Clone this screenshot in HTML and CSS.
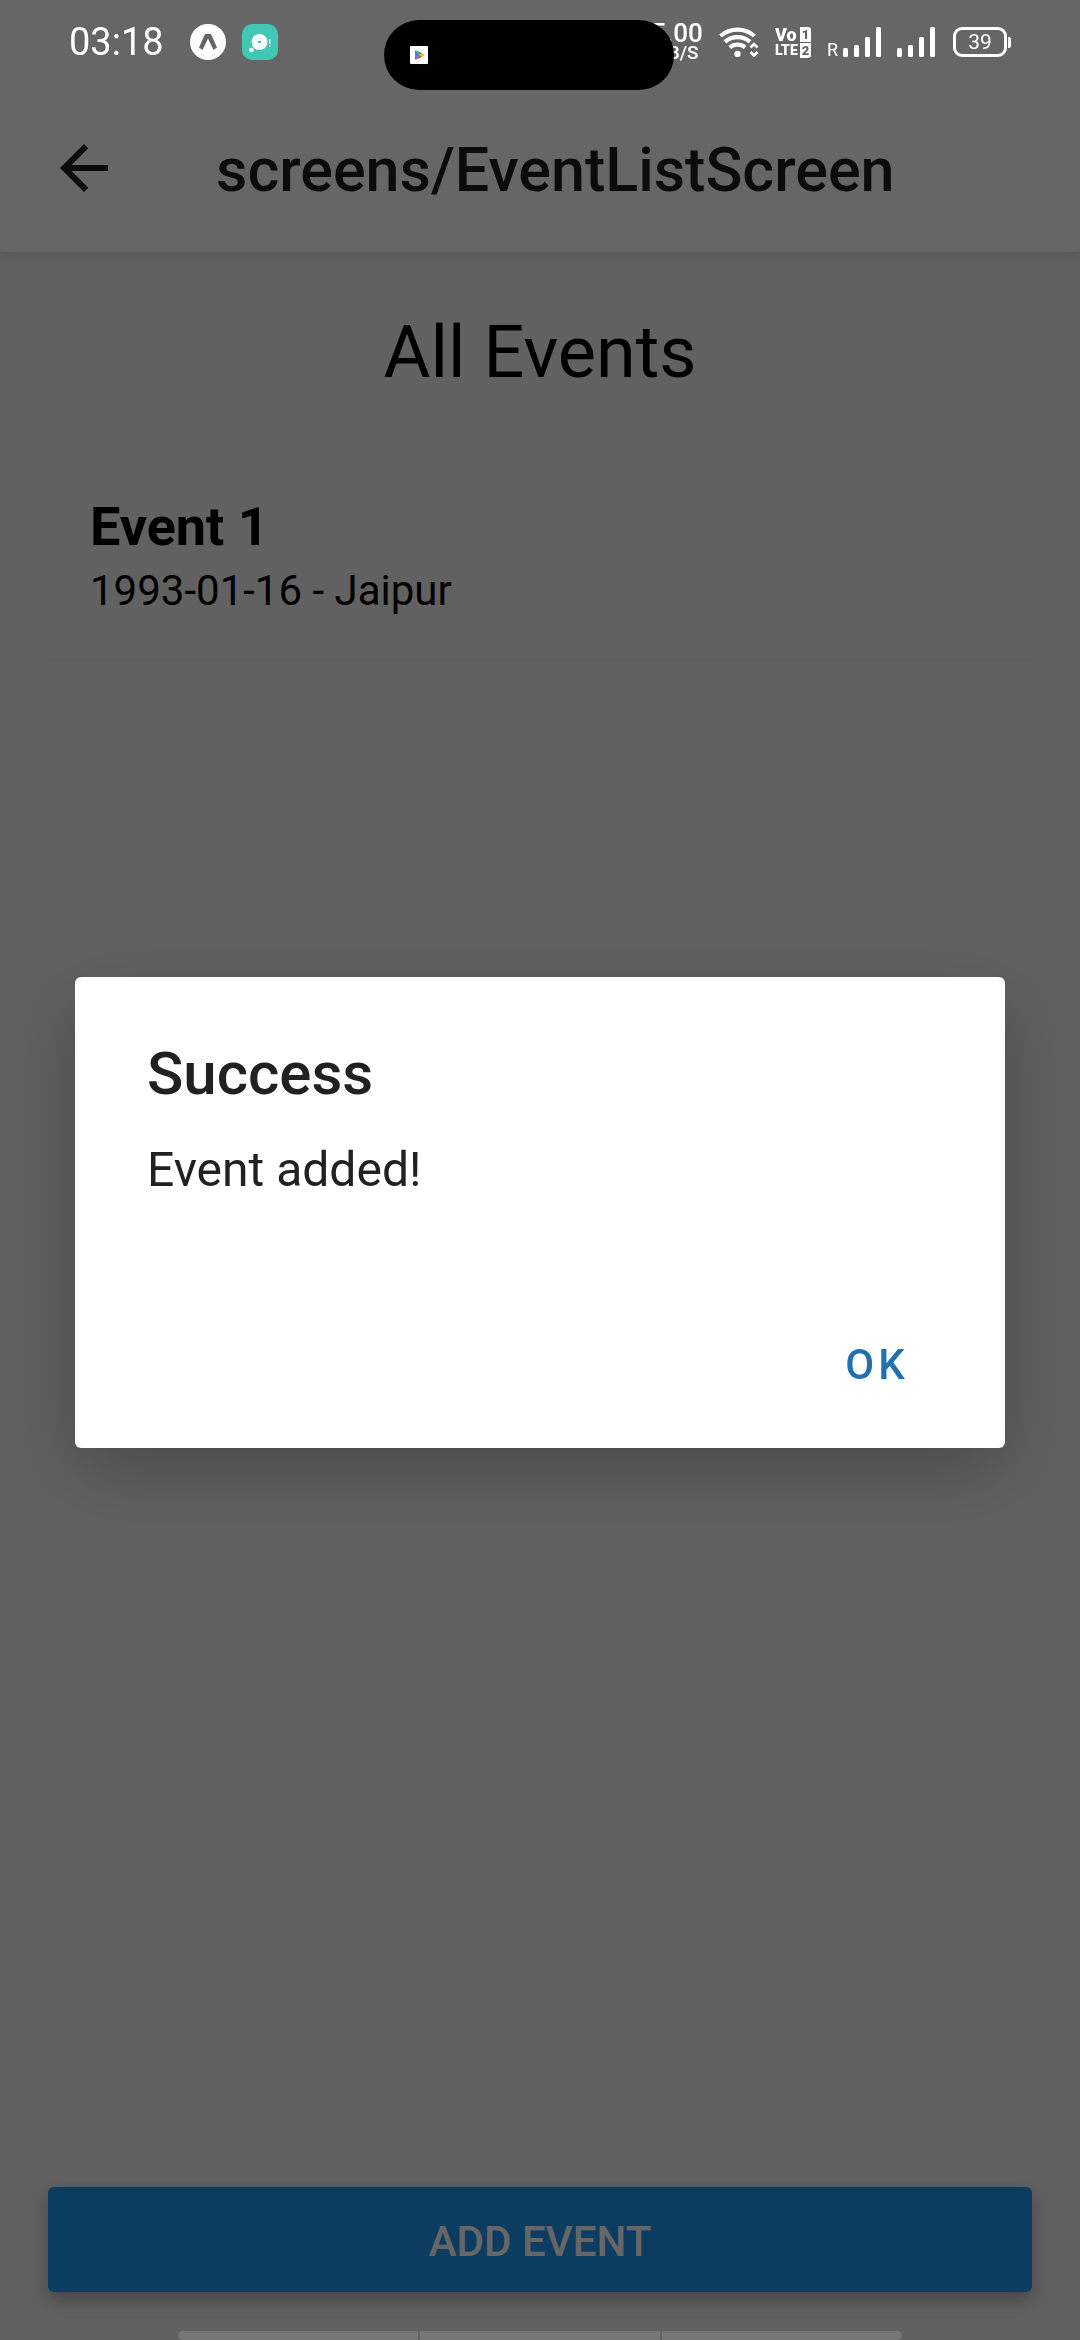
FILE: index.html
```html
<!DOCTYPE html>
<html lang="en">
<head>
<meta charset="utf-8">
<meta name="viewport" content="width=device-width, initial-scale=1">
<title>screens/EventListScreen</title>
<link rel="stylesheet" href="styles.css">
</head>
<body>
<div class="screen">
  <header class="app-bar">
    <button class="back" type="button" aria-label="Back">
      <svg viewBox="0 0 24 24" class="back-icon"><path d="M20 11H7.83l5.59-5.59L12 4l-8 8 8 8 1.41-1.41L7.83 13H20z"/></svg>
    </button>
    <h1 class="app-title">screens/EventListScreen</h1>
  </header>
  <main class="content">
    <h2 class="heading">All Events</h2>
    <ul class="events">
      <li class="event">
        <h3 class="event-name">Event 1</h3>
        <p class="event-info">1993-01-16 - Jaipur</p>
      </li>
    </ul>
    <button class="add" type="button">ADD EVENT</button>
  </main>
</div>

<div class="overlay">
  <section class="dialog" role="alertdialog" aria-labelledby="dialog-title" aria-describedby="dialog-text">
    <h2 class="dialog-title" id="dialog-title">Success</h2>
    <p class="dialog-text" id="dialog-text">Event added!</p>
    <div class="dialog-actions"><button class="ok" type="button">OK</button></div>
  </section>
</div>

<div class="status">
  <div class="status-group">
    <span class="clock">03:18</span>
    <svg class="app-icon" viewBox="0 0 36 36"><circle cx="18" cy="18" r="18" fill="#fff"/><path d="M15 10h6l6 13.500-3.500 2.500L18 14.500 12.500 26 9 23.500z" fill="#666"/></svg>
    <svg class="app-icon" viewBox="0 0 36 36"><rect width="36" height="36" rx="10" fill="#40c8b5"/><circle cx="17.500" cy="18" r="8" fill="#fff"/><rect x="16" y="17" width="3" height="2" fill="#40c8b5"/><circle cx="9.500" cy="26" r="2.300" fill="#fff"/><path d="M27 15h1.500v5H27zM27 21.500h1.500V23H27z" fill="#d5f5ef"/></svg>
  </div>
  <div class="status-group">
    <div class="speed"><span class="speed-value">5.00</span><span class="speed-unit">KB/S</span></div>
    <svg class="wifi" viewBox="0 0 40 30"><g fill="none" stroke="#fff" stroke-width="4.200"><path d="M1.500 9a26 26 0 0 1 34 0"/><path d="M6 14.800a19 19 0 0 1 25 0"/><path d="M10.800 20.500a12 12 0 0 1 15.400 0"/></g><circle cx="18.500" cy="27" r="3.200" fill="#fff"/><path d="M31.500 20.500l3.500-3.500 3.500 3.500M31.500 25l3.500 3.500 3.500-3.500" fill="none" stroke="#fff" stroke-width="2.600"/></svg>
    <div class="volte"><span class="volte-voice">Vo</span><b class="sim">1</b><span>LTE</span><b class="sim">2</b></div>
    <div class="cell"><span class="roaming">R</span>
      <svg class="bars" viewBox="0 0 38 30"><g><rect y="21" width="5" height="9" rx="1.500"/><rect x="11" y="18" width="5" height="12" rx="1.500"/><rect x="22" y="10" width="5" height="20" rx="1.500"/><rect x="33" width="5" height="30" rx="1.500"/></g></svg>
    </div>
    <svg class="bars second" viewBox="0 0 38 30"><g><rect y="21" width="5" height="9" rx="1.500"/><rect x="11" y="18" width="5" height="12" rx="1.500"/><rect x="22" y="10" width="5" height="20" rx="1.500"/><rect x="33" width="5" height="30" rx="1.500"/></g></svg>
    <div class="battery"><span class="battery-level">39</span><i class="battery-tip"></i></div>
  </div>
  <div class="island"><svg class="play" viewBox="0 0 18 18"><rect width="18" height="18" rx="1" fill="#fff"/><path d="M5 4v10l5-5z" fill="#4a80e0"/><path d="M5 4l5 5 2-2z" fill="#3c9f55"/><path d="M5 14l5-5 2 2z" fill="#d8474a"/><path d="M10 9l2-2 3 2-3 2z" fill="#f5b921"/></svg></div>
</div>

<div class="nav-hint"><span></span><span></span><span></span></div>
</body>
</html>
```

FILE: styles.css
```css
* { box-sizing: border-box; }
body { margin: 0; font-family: Roboto, sans-serif; color: #000; }
h1, h2, h3, p, ul { margin: 0; padding: 0; }
button { border: 0; padding: 0; font: inherit; cursor: pointer; }

.screen { min-height: 100vh; display: flex; flex-direction: column; background: #f2f2f2; }

.app-bar {
  display: flex; align-items: center; gap: 96px;
  padding: 84px 48px 0; height: 252px;
  background: #fff; box-shadow: 0 3px 12px rgba(0, 0, 0, .12);
}
.back { width: 72px; height: 72px; background: none; }
.back-icon { display: block; width: 72px; height: 72px; fill: #1c1c1e; }
.app-title { padding-top: 4px; font-size: 61px; line-height: 72px; font-weight: 500; color: #1c1c1e; }

.content { flex: 1; display: flex; flex-direction: column; padding: 53px 48px 48px; }
.heading { font-size: 72px; line-height: 96px; font-weight: 400; text-align: center; }
.events { flex: 1; list-style: none; margin-top: 48px; }
.event { padding: 42px 42px 40px; border-bottom: 3px solid #eee; }
.event-name { font-size: 54px; line-height: 72px; font-weight: 700; }
.event-info { font-size: 42px; line-height: 56px; }
.add {
  height: 105px; padding-top: 3px; border-radius: 6px; background: #2196f3; color: #fff;
  font-size: 42px; font-weight: 500; box-shadow: 0 8px 18px rgba(0, 0, 0, .3);
}

.nav-hint { position: fixed; inset: auto 0 0; display: flex; gap: 2px; height: 9px; width: 67%; margin: 0 auto; }
.nav-hint span { flex: 1; background: #767676; }
.nav-hint span:first-child { border-radius: 5px 0 0 5px; }
.nav-hint span:last-child { border-radius: 0 5px 5px 0; }

.overlay {
  position: fixed; inset: 0; display: flex; align-items: center; justify-content: center;
  padding: 84px 75px 0; background: rgba(0, 0, 0, .6);
}
.dialog {
  flex: 1; padding: 60px 72px 24px; background: #fff; color: #212121; border-radius: 6px;
  box-shadow: 0 24px 72px rgba(0, 0, 0, .25);
}
.dialog-title { font-size: 60px; line-height: 74px; font-weight: 500; }
.dialog-text { margin-top: 26px; font-size: 48px; line-height: 66px; }
.dialog-actions { display: flex; justify-content: flex-end; margin-top: 103px; }
.ok {
  width: 112px; height: 118px; background: none; color: #2171b0;
  font-size: 42px; font-weight: 500; letter-spacing: 4px;
}

.status {
  position: fixed; inset: 0 0 auto; height: 84px; padding: 0 69px;
  display: flex; align-items: center; justify-content: space-between; color: #fff;
}
.status-group { display: flex; align-items: center; gap: 16px; }
.clock { font-size: 38px; line-height: 40px; margin-right: 10px; }
.app-icon { width: 36px; height: 36px; }
.speed { display: flex; flex-direction: column; align-items: center; font-weight: 500; }
.speed-value { font-size: 26px; line-height: 22px; }
.speed-unit { font-size: 19px; line-height: 18px; }
.wifi { width: 40px; height: 30px; }
.volte { display: grid; grid-template-columns: 24px 11px; gap: 1px; font-size: 14px; line-height: 15px; font-weight: 900; }
.volte-voice { font-size: 18px; }
.sim { background: #fff; color: #666; border-radius: 0 3px 0 0; text-align: center; font-size: 13px; line-height: 15px; }
.sim:last-child { border-radius: 0 0 3px 0; }
.cell { display: flex; align-items: flex-end; gap: 5px; }
.roaming { font-size: 18px; line-height: 15px; }
.bars { width: 38px; height: 30px; fill: #fff; }
.second { margin-right: 2px; }
.battery { display: flex; align-items: center; gap: 1px; }
.battery-level { width: 54px; height: 30px; border: 3px solid #fff; border-radius: 9px; font-size: 21px; line-height: 24px; text-align: center; }
.battery-tip { width: 3px; height: 11px; background: #fff; border-radius: 0 2px 2px 0; }
.island {
  position: absolute; top: 20px; left: 384px; width: 290px; height: 70px;
  display: flex; align-items: center; padding-left: 26px; border-radius: 35px; background: #000;
}
.play { width: 18px; height: 18px; }
```
